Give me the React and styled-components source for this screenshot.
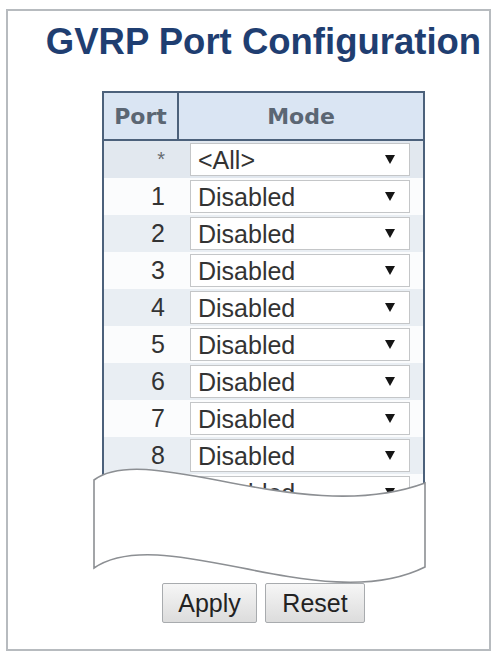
import React from "react";
import styled, { createGlobalStyle } from "styled-components";

const GlobalStyle = createGlobalStyle`
  * { box-sizing: border-box; }
  body {
    margin: 0;
    background: #ffffff;
    font-family: "Liberation Sans", Arial, sans-serif;
  }
`;

const Frame = styled.div`
  margin: 9px 0 0 6px;
  width: 485px;
  height: 642px;
  border: 2px solid #b7bbbf;
  padding-left: 30px;
  display: flex;
  flex-direction: column;
  align-items: center;
`;

const Title = styled.h1`
  margin: 10px 0 0;
  font-family: "Liberation Sans", Arial, sans-serif;
  font-size: 36.5px;
  line-height: 42px;
  font-weight: 700;
  color: #1f3e71;
  white-space: nowrap;
`;

const TableWrap = styled.div`
  position: relative;
  margin-top: 28px;
  height: 492px;
`;

const Table = styled.table`
  width: 323px;
  table-layout: fixed;
  border-collapse: separate;
  border-spacing: 0;
  border: 2px solid #4c617b;
`;

const HeadCell = styled.th`
  width: ${(p) => p.$w}px;
  height: 48px;
  padding: 0;
  background: #dae5f3;
  border-bottom: 2px solid #4c617b;
  border-right: ${(p) => (p.$divider ? "2px solid #4c617b" : "none")};
  font-family: "DejaVu Sans", Verdana, sans-serif;
  font-size: 22px;
  font-weight: 700;
  color: #5b6673;
  text-align: center;
  vertical-align: middle;
`;

const Row = styled.tr`
  height: 37px;
  background: ${(p) => p.$bg};
`;

const PortCell = styled.td`
  padding: 0 14px 0 0;
  text-align: right;
  vertical-align: middle;
  font-size: ${(p) => (p.$star ? "20px" : "25px")};
  color: ${(p) => (p.$star ? "#666a70" : "#333")};
`;

const ModeCell = styled.td`
  padding: 0 13px 0 11px;
  vertical-align: middle;
`;

const SelectWrap = styled.div`
  position: relative;
  width: 220px;
  height: 33px;
`;

const Select = styled.select`
  appearance: none;
  -webkit-appearance: none;
  width: 100%;
  height: 100%;
  margin: 0;
  padding: 0 30px 0 7px;
  border: 1px solid #c4c6c8;
  border-radius: 0;
  background: #ffffff;
  font-family: "Liberation Sans", Arial, sans-serif;
  font-size: 25px;
  color: #333;
  outline: none;
`;

const Arrow = styled.span`
  position: absolute;
  right: 15px;
  top: 12px;
  width: 0;
  height: 0;
  border-left: 5px solid transparent;
  border-right: 5px solid transparent;
  border-top: 9px solid #151515;
  pointer-events: none;
`;

const Cut = styled.svg`
  position: absolute;
  left: -9px;
  top: 375px;
  width: 334px;
  height: 119px;
  overflow: visible;
`;

const Buttons = styled.div`
  display: flex;
  gap: 8px;
`;

const Button = styled.button`
  width: ${(p) => p.$w}px;
  height: 40px;
  padding: 0;
  border: 1px solid #a8abae;
  border-radius: 2px;
  background: linear-gradient(#f6f6f6, #dcdcdc);
  font-family: "Liberation Sans", Arial, sans-serif;
  font-size: 25px;
  color: #222;
`;

const rows = [
  { port: "*", value: "<All>", bg: "#e2e8ef" },
  ...Array.from({ length: 9 }, (_, i) => ({
    port: String(i + 1),
    value: "Disabled",
    bg: i % 2 === 0 ? "#fbfcfd" : "#e9eef3",
  })),
];

const ModeSelect = ({ value }) => (
  <SelectWrap>
    <Select defaultValue={value}>
      {value === "<All>" && <option>{"<All>"}</option>}
      <option>Disabled</option>
      <option>Enabled</option>
    </Select>
    <Arrow />
  </SelectWrap>
);

export default function App() {
  return (
    <>
      <GlobalStyle />
      <Frame>
        <Title>GVRP Port Configuration</Title>
        <TableWrap>
          <Table>
            <thead>
              <tr>
                <HeadCell $w={75} $divider>Port</HeadCell>
                <HeadCell $w={244}>Mode</HeadCell>
              </tr>
            </thead>
            <tbody>
              {rows.map((r) => (
                <Row key={r.port} $bg={r.bg}>
                  <PortCell $star={r.port === "*"}>{r.port}</PortCell>
                  <ModeCell>
                    <ModeSelect value={r.value} />
                  </ModeCell>
                </Row>
              ))}
            </tbody>
          </Table>
          <Cut viewBox="0 0 334 119">
            <path
              d="M1 14 C55 -26 210 62 332 17 L332 101 C230 152 70 55 1 102 Z"
              fill="#ffffff"
              stroke="#8c8f93"
              strokeWidth="1.6"
            />
          </Cut>
        </TableWrap>
        <Buttons>
          <Button $w={95}>Apply</Button>
          <Button $w={100}>Reset</Button>
        </Buttons>
      </Frame>
    </>
  );
}
